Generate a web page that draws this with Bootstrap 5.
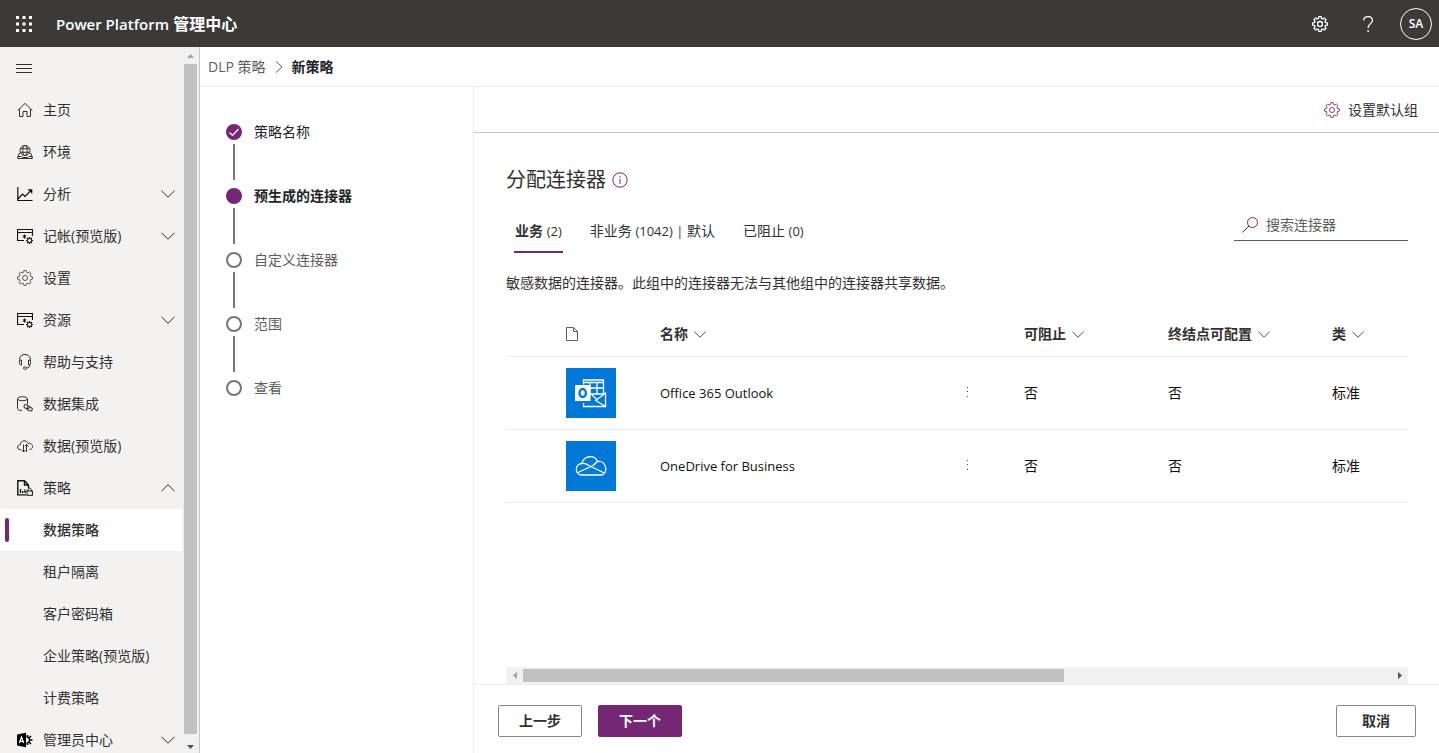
<!DOCTYPE html>
<html lang="zh-CN">
<head>
<meta charset="utf-8">
<meta name="viewport" content="width=device-width, initial-scale=1">
<title>Power Platform 管理中心</title>
<link href="https://cdn.jsdelivr.net/npm/bootstrap@5.3.0/dist/css/bootstrap.min.css" rel="stylesheet">
<style>
:root { --brand: #742774; --ink: #323130; --muted: #605e5c; --line: #edebe9; }
body { font: 14px/20px "Open Sans", "Noto Sans CJK SC", sans-serif; color: var(--ink); }
a { color: inherit; text-decoration: none; }
svg { display: block; flex: none; fill: none; stroke: currentColor; }
.i16 { width: 16px; height: 16px; }
.chev { width: 14px; height: 8px; }
.latin { font-size: 13px; }

.suite { background: #3b3a39; color: #fff; height: 47px; padding: 0 7px 0 16px; }
.suite h1 { font-size: 16px; line-height: 20px; font-weight: 600; }
.suite h1 .latin { font-size: 15px; }
.suite button, .plain { background: none; border: 0; padding: 0; color: inherit; }
.suite .dots { fill: currentColor; stroke: none; }
.suite-tools { gap: 32px; }
.suite .avatar { width: 32px; height: 32px; border: 1px solid #fff; font-size: 12px; font-weight: 600; margin-left: -8px; }

.side { width: 200px; background: #f3f2f1; border-right: 1px solid #c8c6c4; }
.side .menu-row { height: 42px; padding: 0 7px 0 17px; gap: 10px; width: 100%; text-align: left; }
.side .fold { padding-left: 16px; }
.side .sub-row { padding-left: 43px; }
.side .chosen { background: #fff; font-weight: 500; position: relative; }
.side .chosen::before { content: ""; position: absolute; left: 5px; top: 9px; width: 4px; height: 24px; border-radius: 2px; background: var(--brand); }
.vbar { width: 17px; background: #f1f1f1; }
.vbar .arrow, .hbar .arrow { width: 17px; height: 17px; stroke: none; }
.vbar .thumb { width: 13px; background: #c1c1c1; margin-bottom: 2px; }
.hbar { height: 17px; background: #f1f1f1; }
.hbar .thumb { height: 13px; width: 60%; background: #c1c1c1; }

.crumbs { height: 40px; border-bottom: 1px solid var(--line); padding: 0 8px; gap: 9px; color: var(--muted); }
.steps { width: 274px; border-right: 1px solid var(--line); padding: 37px 26px; }
.steps li { height: 64px; gap: 12px; color: var(--muted); line-height: 16px; }
.steps .rail { width: 16px; gap: 4px; }
.steps .dot { width: 16px; height: 16px; border: 2px solid #797775; border-radius: 50%; }
.steps .dot.full { background: var(--brand); border-color: var(--brand); color: #fff; }
.steps .dot svg { width: 12px; height: 12px; }
.steps .bar { width: 2px; height: 36px; background: #797775; }
.cmds { height: 46px; border-bottom: 1px solid #c8c6c4; padding: 0 21px; }
.content { padding: 33px 31px 0 32px; }
.content h2 { font-size: 20px; line-height: 28px; font-weight: 400; }
.title-row { gap: 6px; margin-bottom: 15px; }
.tabs { gap: 26px; padding-left: 8px; }
.tabs button { height: 44px; border-bottom: 2px solid transparent; padding: 2px 1px 0; }
.tabs .on { border-color: var(--brand); }
.finder { width: 174px; height: 32px; border-bottom: 1px solid var(--muted); padding: 0 8px; gap: 8px; color: var(--brand); }
.finder input { border: 0; outline: 0; padding: 0; background: none; width: 130px; }
.finder input::placeholder { color: var(--muted); opacity: 1; }
.desc { margin: 20px 0; }
.grid-table { table-layout: fixed; width: 100%; }
.grid-table th { height: 43px; font-weight: 700; }
.grid-table th span { gap: 6px; }
.grid-table td { height: 73px; color: #111; }
.grid-table tr { border-bottom: 1px solid var(--line); }
.c-pick { width: 59px; } .c-icon { width: 94px; } .c-name { width: 304px; } .c-more { width: 60px; } .c-block { width: 144px; } .c-end { width: 164px; }
.tile { width: 50px; height: 50px; background: #0078d7; color: #fff; }
.foot { height: 69px; border-top: 1px solid var(--line); padding: 4px 23px 0 24px; }
.foot .btn { height: 32px; width: 84px; padding: 0; border-radius: 2px; font-size: 14px; line-height: 20px; font-weight: 700; border-color: #8a8886; color: var(--ink); }
.foot .go { background: var(--brand); border-color: var(--brand); color: #fff; }
.foot .stop { width: 80px; }
</style>
</head>
<body>
<svg width="0" height="0" class="position-absolute" aria-hidden="true">
  <symbol id="gear" viewBox="-8 -8 16 16"><path d="M-1.1-7.4H1.1L1.6-5.5 2.8-5 4.4-6 6-4.4 5-2.8 5.5-1.6 7.4-1.1V1.1L5.5 1.6 5 2.8 6 4.4 4.4 6 2.8 5 1.6 5.5 1.1 7.4H-1.1L-1.6 5.5-2.8 5-4.4 6-6 4.4-5 2.8-5.5 1.6-7.4 1.1V-1.1L-5.5-1.6-5-2.8-6-4.4-4.4-6-2.8-5-1.6-5.5Z"/><circle r="2.5"/></symbol>
  <symbol id="down" viewBox="0 0 14 8"><path d="M.5.8 7 7.2 13.500.8"/></symbol>
  <symbol id="up" viewBox="0 0 14 8"><path d="M.5 7.200 7 .8 13.500 7.200"/></symbol>
  <symbol id="window" viewBox="0 0 16 16"><path d="M7 12.500H.5V1.500H15.500V8M.5 4.500H15.500" stroke="#111" stroke-width="1.200"/><path d="M7.500 6.500v4M5.800 7.500l3.400 2M9.200 7.500l-3.400 2" stroke="#111"/><circle cx="12.500" cy="12.500" r="2" stroke="#111"/><path d="M12.500 9v1.500M12.500 14.500V16M9 12.500h1.500M14.500 12.500H16M10 10l1.100 1.100M13.900 13.900 15 15M10 15l1.100-1.100M13.900 11.100 15 10" stroke="#111" stroke-width="1.200"/></symbol>
</svg>
<div class="d-flex flex-column vh-100 overflow-hidden">
  <header class="suite d-flex align-items-center justify-content-between flex-shrink-0">
    <div class="d-flex align-items-center">
      <button type="button" aria-label="应用启动器"><svg class="i16 dots" viewBox="0 0 16 16"><path d="M0 0h3v3H0zM6.500 0h3v3h-3zM13 0h3v3h-3zM0 6.500h3v3H0zM6.500 6.500h3v3h-3zM13 6.500h3v3h-3zM0 13h3v3H0zM6.500 13h3v3h-3zM13 13h3v3h-3z"/></svg></button>
      <h1 class="mb-0 ms-4"><span class="latin">Power Platform</span> 管理中心</h1>
    </div>
    <div class="suite-tools d-flex align-items-center">
      <button type="button" aria-label="设置"><svg class="i16" stroke-width="1.300"><use href="#gear"/></svg></button>
      <button type="button" aria-label="帮助"><svg class="i16" viewBox="0 0 16 16" stroke-width="1.300"><path d="M3.700 4.500C3.700-.7 12.500-.6 12.500 4.200 12.500 7.600 8.100 7.800 8.100 12M8.100 14v2"/></svg></button>
      <button type="button" class="avatar rounded-circle">SA</button>
    </div>
  </header>
  <div class="d-flex flex-fill overflow-hidden">
    <aside class="side d-flex flex-shrink-0">
      <nav class="flex-fill overflow-hidden" aria-label="主导航">
        <button type="button" class="plain menu-row fold d-flex align-items-center" aria-label="折叠菜单"><svg class="i16" viewBox="0 0 16 16"><path d="M0 4.500h16M0 8.500h16M0 12.500h16"/></svg></button>
        <a href="#" class="menu-row d-flex align-items-center"><svg class="i16" viewBox="0 0 16 16"><path d="M.7 8.600 8 1.400l7.300 7.200M2.500 7v7.500H6V9.500h4v5h3.500V7"/></svg>主页</a>
        <a href="#" class="menu-row d-flex align-items-center"><svg class="i16" viewBox="0 0 16 16"><circle cx="8" cy="6.500" r="5"/><ellipse cx="8" cy="6.500" rx="2.200" ry="5"/><path d="M3.300 4.700h9.400M3.300 8.300h9.400M3.200 9.500H2L.6 14.500H15.400L14 9.500H12.800M.6 12.500h4l1 1h5l1-1h4"/></svg>环境</a>
        <a href="#" class="menu-row d-flex align-items-center"><svg class="i16" viewBox="0 0 16 16"><path d="M.8 1v13.500H15.500M1 13l4.500-5 2.500 2.500L14.500 4M11 3.800h3.700V7.500" stroke="#111" stroke-width="1.200"/></svg><span class="flex-fill">分析</span><svg class="chev"><use href="#down"/></svg></a>
        <a href="#" class="menu-row d-flex align-items-center"><svg class="i16"><use href="#window"/></svg><span class="flex-fill">记帐(预览版)</span><svg class="chev"><use href="#down"/></svg></a>
        <a href="#" class="menu-row d-flex align-items-center"><svg class="i16" stroke-width=".8"><use href="#gear"/></svg>设置</a>
        <a href="#" class="menu-row d-flex align-items-center"><svg class="i16"><use href="#window"/></svg><span class="flex-fill">资源</span><svg class="chev"><use href="#down"/></svg></a>
        <a href="#" class="menu-row d-flex align-items-center"><svg class="i16" viewBox="0 0 16 16"><path d="M2.500 7V5.500C2.500-1.200 13.500-1.200 13.500 5.500V7M4.500 6v5H3.700C2 11 2 6 3.700 6zM11.500 6v5h.8C14 11 14 6 12.300 6zM13 10.500c0 2.500-1.500 3.500-3.500 3.500"/><rect x="6.500" y="13" width="3" height="2.300" rx="1"/></svg>帮助与支持</a>
        <a href="#" class="menu-row d-flex align-items-center"><svg class="i16" viewBox="0 0 16 16"><ellipse cx="5.500" cy="2.700" rx="5" ry="2"/><path d="M.5 2.700v10c0 1.200 2 1.800 4.500 1.900M10.500 2.700V8"/><rect x="6.800" y="9" width="5.500" height="3.500" rx="1.700" transform="rotate(25 9.500 11)"/><rect x="10" y="11" width="5.500" height="3.500" rx="1.700" transform="rotate(25 12.500 12.500)"/></svg>数据集成</a>
        <a href="#" class="menu-row d-flex align-items-center"><svg class="i16" viewBox="0 0 16 16"><path d="M4 11.500H3C-.3 11.500-.2 6.700 3.200 6.700 3.700 2 9.800 1.500 11 5.500c5.800-1 5.800 6 1.500 6H12M6.500 6.500V14M4.500 12l2 2 2-2M9.500 14V6.500M7.800 8.200 9.500 6.500l2 2"/></svg>数据(预览版)</a>
        <a href="#" class="menu-row d-flex align-items-center"><svg class="i16" viewBox="0 0 16 16" color="#111"><path d="M9 14.900H.8V.8H7.500L11.500 5V8M7.500.8V5h4" stroke-width="1.400"/><path d="M3.500 9v4M5.700 11v2M8 9.500V13" stroke-width="1.400"/><rect x="10" y="11" width="5.400" height="4.300"/><path d="M11 11V9.700c0-2 3.300-2 3.300 0V11"/></svg><span class="flex-fill">策略</span><svg class="chev"><use href="#up"/></svg></a>
        <a href="#" class="menu-row sub-row chosen d-flex align-items-center" aria-current="page">数据策略</a>
        <a href="#" class="menu-row sub-row d-flex align-items-center">租户隔离</a>
        <a href="#" class="menu-row sub-row d-flex align-items-center">客户密码箱</a>
        <a href="#" class="menu-row sub-row d-flex align-items-center">企业策略(预览版)</a>
        <a href="#" class="menu-row sub-row d-flex align-items-center">计费策略</a>
        <a href="#" class="menu-row d-flex align-items-center"><svg class="i16" viewBox="0 0 16 16"><path d="M0 2.500 9 .8v14.400L0 13.500z" fill="#000" stroke="none"/><path d="m2.300 11 2.200-6 2.200 6M3 9.300h3" stroke="#fff" stroke-width="1.200"/><path d="M9.500 5c4-.8 4 6.800 0 6M10.500 3v2M14 4l-1.700 1.700M13 8h2.500M12.300 10.300 14 12M10.500 11v2" stroke="#000" stroke-width="1.500"/></svg><span class="flex-fill">管理员中心</span><svg class="chev"><use href="#down"/></svg></a>
      </nav>
      <div class="vbar d-flex flex-column align-items-center flex-shrink-0" aria-hidden="true">
        <svg class="arrow" viewBox="0 0 17 17"><path d="M5 11h7L8.500 7z" fill="#a3a3a3"/></svg>
        <div class="thumb flex-fill"></div>
        <svg class="arrow" viewBox="0 0 17 17"><path d="M5 9h7l-3.500 4z" fill="#505050"/></svg>
      </div>
    </aside>
    <div class="d-flex flex-column flex-fill overflow-hidden">
      <nav class="crumbs d-flex align-items-center flex-shrink-0" aria-label="导航路径">
        <a href="#">DLP 策略</a>
        <svg width="8" height="12" viewBox="0 0 8 12"><path d="M1 .5 7 6l-6 5.500"/></svg>
        <span class="fw-bold text-dark">新策略</span>
      </nav>
      <div class="d-flex flex-fill overflow-hidden">
        <ol class="steps list-unstyled mb-0 flex-shrink-0">
          <li class="d-flex text-dark"><div class="rail d-flex flex-column align-items-center"><span class="dot full"><svg viewBox="0 0 12 12"><path d="m1.500 6.500 3 3L10.500 3" stroke-width="1.200"/></svg></span><span class="bar"></span></div><div>策略名称</div></li>
          <li class="d-flex fw-bold text-dark" aria-current="step"><div class="rail d-flex flex-column align-items-center"><span class="dot full"></span><span class="bar"></span></div><div>预生成的连接器</div></li>
          <li class="d-flex"><div class="rail d-flex flex-column align-items-center"><span class="dot"></span><span class="bar"></span></div><div>自定义连接器</div></li>
          <li class="d-flex"><div class="rail d-flex flex-column align-items-center"><span class="dot"></span><span class="bar"></span></div><div>范围</div></li>
          <li class="d-flex"><div class="rail d-flex flex-column align-items-center"><span class="dot"></span></div><div>查看</div></li>
        </ol>
        <main class="d-flex flex-column flex-fill overflow-hidden">
          <div class="cmds d-flex align-items-center justify-content-end flex-shrink-0">
            <button type="button" class="plain d-flex align-items-center gap-2"><svg class="i16" stroke-width=".9" color="#742774"><use href="#gear"/></svg>设置默认组</button>
          </div>
          <section class="content d-flex flex-column flex-fill overflow-hidden">
            <div class="title-row d-flex align-items-center">
              <h2 class="mb-0">分配连接器</h2>
              <button type="button" class="plain" aria-label="详细信息"><svg class="i16" viewBox="0 0 16 16" color="#742774"><circle cx="8" cy="8" r="7.200"/><path d="M8 7v5M8 4v1.500"/></svg></button>
            </div>
            <div class="d-flex justify-content-between align-items-start">
              <div class="tabs d-flex" role="tablist">
                <button type="button" role="tab" aria-selected="true" class="plain on"><b>业务</b> <span class="latin">(2)</span></button>
                <button type="button" role="tab" aria-selected="false" class="plain">非业务 <span class="latin">(1042) |</span> 默认</button>
                <button type="button" role="tab" aria-selected="false" class="plain">已阻止 <span class="latin">(0)</span></button>
              </div>
              <div class="finder d-flex align-items-center">
                <label for="find" aria-label="搜索连接器"><svg class="i16" viewBox="0 0 16 16"><circle cx="10.500" cy="5.500" r="5"/><path d="M7 9 .5 15.500"/></svg></label>
                <input id="find" type="text" placeholder="搜索连接器">
              </div>
            </div>
            <p class="desc">敏感数据的连接器。此组中的连接器无法与其他组中的连接器共享数据。</p>
            <table class="grid-table">
              <colgroup><col class="c-pick"><col class="c-icon"><col class="c-name"><col class="c-more"><col class="c-block"><col class="c-end"><col></colgroup>
              <thead>
                <tr>
                  <th></th>
                  <th scope="col" aria-label="图标"><svg width="12" height="14" viewBox="0 0 12 14" color="#605e5c"><path d="M.5.5H7.500L11.500 4.500V13.500H.5zM7.500.5V4.500H11.500"/></svg></th>
                  <th scope="col"><span class="d-flex align-items-center">名称<svg width="12" height="7" viewBox="0 0 14 8"><use href="#down"/></svg></span></th>
                  <th></th>
                  <th scope="col"><span class="d-flex align-items-center">可阻止<svg width="12" height="7" viewBox="0 0 14 8"><use href="#down"/></svg></span></th>
                  <th scope="col"><span class="d-flex align-items-center">终结点可配置<svg width="12" height="7" viewBox="0 0 14 8"><use href="#down"/></svg></span></th>
                  <th scope="col"><span class="d-flex align-items-center">类<svg width="12" height="7" viewBox="0 0 14 8"><use href="#down"/></svg></span></th>
                </tr>
              </thead>
              <tbody>
                <tr>
                  <td></td>
                  <td><svg class="tile" viewBox="0 0 50 50"><path d="M17.500 16.500V12h20v15M17.500 14.500h20M24 14v14M31 14v13M22 20h15.500M24 26h13M26 27l5 4.500 8.500-6.500v13.500h-22V35M29 32l10.500 6.500" stroke-width="1.300"/><path d="M9 17h15.500v16H9z" fill="#fff" stroke="none"/><ellipse cx="16.700" cy="25" rx="3.200" ry="4" stroke="#0078d7" stroke-width="2.400"/></svg></td>
                  <td class="latin">Office 365 Outlook</td>
                  <td><button type="button" class="plain" aria-label="更多操作"><svg width="8" height="12" viewBox="0 0 8 12"><path d="M3 1.500h1M3 5.500h1M3 10.500h1" stroke="#742774"/></svg></button></td>
                  <td>否</td><td>否</td><td>标准</td>
                </tr>
                <tr>
                  <td></td>
                  <td><svg class="tile" viewBox="0 0 50 50"><path d="M16 34c-7.500 0-7.500-11-.2-11.500 2.200-8.300 12.700-9 15.700-2 9-1.500 11.500 12.500 3.500 13.500zM15.800 22.500c3-.5 5 .5 7 2l15.500 7.500M12 31.500l15-7c1.700-1.300 3-2.600 4.500-4" stroke-width="1.300"/></svg></td>
                  <td class="latin">OneDrive for Business</td>
                  <td><button type="button" class="plain" aria-label="更多操作"><svg width="8" height="12" viewBox="0 0 8 12"><path d="M3 1.500h1M3 5.500h1M3 10.500h1" stroke="#742774"/></svg></button></td>
                  <td>否</td><td>否</td><td>标准</td>
                </tr>
              </tbody>
            </table>
            <div class="hbar d-flex align-items-center mt-auto flex-shrink-0" aria-hidden="true">
              <svg class="arrow" viewBox="0 0 17 17"><path d="M11 5v7L7 8.500z" fill="#a3a3a3"/></svg>
              <div class="thumb me-auto"></div>
              <svg class="arrow" viewBox="0 0 17 17"><path d="M7 5v7l4-3.500z" fill="#505050"/></svg>
            </div>
          </section>
          <footer class="foot d-flex align-items-center gap-3 flex-shrink-0">
            <button type="button" class="btn">上一步</button>
            <button type="button" class="btn go">下一个</button>
            <button type="button" class="btn stop ms-auto">取消</button>
          </footer>
        </main>
      </div>
    </div>
  </div>
</div>
<script src="https://cdn.jsdelivr.net/npm/bootstrap@5.3.0/dist/js/bootstrap.bundle.min.js"></script>
</body>
</html>
